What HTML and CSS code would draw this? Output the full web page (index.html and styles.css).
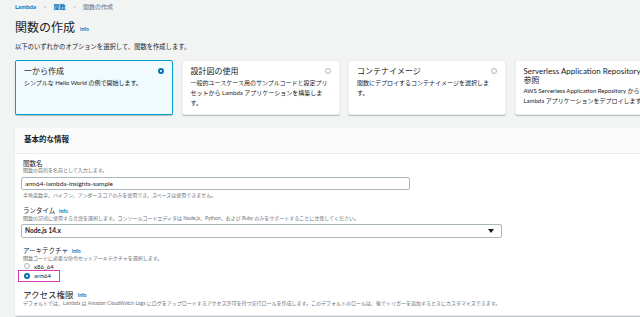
FILE: index.html
```html
<!DOCTYPE html>
<html lang="ja">
  <head>
    <meta charset="UTF-8" />
    <title>関数の作成</title>
    <link rel="stylesheet" href="styles.css">
  </head>
  <body>
    <div class="page">
      <div class="crumbs">
        <a>Lambda</a><span class="sep">&gt;</span><a>関数</a><span class="sep">&gt;</span><span class="here">関数の作成</span>
      </div>
      <h1>関数の作成 <span class="info">Info</span></h1>
      <p class="lead">以下のいずれかのオプションを選択して、関数を作成します。</p>

      <div class="cards">
        <div class="card selected">
          <div class="card-head">
            <span class="card-title">一から作成</span>
            <span class="radio on"></span>
          </div>
          <p class="card-desc">シンプルな Hello World の例で開始します。</p>
        </div>
        <div class="card">
          <div class="card-head">
            <span class="card-title">設計図の使用</span>
            <span class="radio"></span>
          </div>
          <p class="card-desc">一般的ユースケース用のサンプルコードと設定プリセットから Lambda アプリケーションを構築します。</p>
        </div>
        <div class="card">
          <div class="card-head">
            <span class="card-title">コンテナイメージ</span>
            <span class="radio"></span>
          </div>
          <p class="card-desc">関数にデプロイするコンテナイメージを選択します。</p>
        </div>
        <div class="card wide">
          <div class="card-head">
            <span class="card-title">Serverless Application Repository から<br>参照</span>
          </div>
          <p class="card-desc">AWS Serverless Application Repository からシンプル Lambda アプリケーションをデプロイします。</p>
        </div>
      </div>

      <div class="panel">
        <div class="panel-head">基本的な情報</div>
        <div class="panel-body">
          <div class="field">
            <div class="label">関数名</div>
            <div class="desc">関数の目的を名前として入力します。</div>
            <div class="input">arm64-lambda-insights-sample</div>
            <div class="hint">半角英数字、ハイフン、アンダースコアのみを使用でき、スペースは使用できません。</div>
          </div>

          <div class="field">
            <div class="label">ランタイム <span class="info">Info</span></div>
            <div class="desc">関数の記述に使用する言語を選択します。コンソールコードエディタは Node.js、Python、および Ruby のみをサポートすることに注意してください。</div>
            <div class="select">Node.js 14.x<span class="caret"></span></div>
          </div>

          <div class="field arch">
            <div class="label">アーキテクチャ <span class="info">Info</span></div>
            <div class="desc">関数コードに必要な命令セットアーキテクチャを選択します。</div>
            <div class="option"><span class="radio"></span>x86_64</div>
            <div class="option marked"><span class="radio on"></span>arm64</div>
          </div>

          <div class="section-title">アクセス権限 <span class="info">Info</span></div>
          <div class="desc">デフォルトでは、Lambda は Amazon CloudWatch Logs にログをアップロードするアクセス許可を持つ実行ロールを作成します。このデフォルトのロールは、後でトリガーを追加するときにカスタマイズできます。</div>
        </div>
      </div>
    </div>
  </body>
</html>
```

FILE: styles.css
```css
* {
  margin: 0;
  padding: 0;
  box-sizing: border-box;
}
html,
body {
  height: 100%;
  overflow: hidden;
}
body {
  background-color: #f2f3f3;
  font-family: Lato, "Noto Sans CJK JP", sans-serif;
  color: #16191f;
}
.page {
  padding-left: 15px;
  width: 700px;
}
.crumbs {
  font-size: 6px;
  line-height: 8px;
  padding-top: 3px;
  color: #687078;
}
.crumbs a {
  color: #0073bb;
  font-weight: bold;
}
.crumbs .sep {
  margin: 0 7px;
  color: #aab7b8;
}
h1 {
  font-size: 12px;
  font-weight: normal;
  line-height: 14px;
  margin-top: 10px;
}
.info {
  color: #0073bb;
  font-size: 5px;
  font-weight: bold;
  vertical-align: middle;
  margin-left: 2px;
}
.lead {
  font-size: 6.3px;
  line-height: 9px;
  margin-top: 6px;
}
.cards {
  display: flex;
  gap: 8.5px;
  margin-top: 9px;
}
.card {
  width: 158px;
  height: 55px;
  flex-shrink: 0;
  background: white;
  border: 1px solid #eef0f0;
  border-radius: 2px;
  box-shadow: 0 1px 1px rgba(0, 28, 36, 0.25);
  padding: 5px 8px;
}
.card.wide {
  width: 172px;
}
.card.wide .card-title {
  line-height: 9px;
  padding-top: 1px;
}
.card.selected {
  background: #f1faff;
  border-color: #00a1c9;
}
.card-head {
  display: flex;
  justify-content: space-between;
  align-items: center;
}
.card-title {
  font-size: 8px;
  line-height: 11px;
}
.card-desc {
  font-size: 6px;
  line-height: 10px;
  margin-top: 1px;
}
.radio {
  display: inline-block;
  width: 6px;
  height: 6px;
  border-radius: 50%;
  border: 1px solid #aab7b8;
  background: white;
  flex-shrink: 0;
}
.radio.on {
  border: 2px solid #0073bb;
}
.panel {
  margin-top: 13px;
  background: white;
  box-shadow: 0 1px 1px rgba(0, 28, 36, 0.25);
  border-radius: 2px;
}
.panel-head {
  background: #fafafa;
  border-bottom: 1px solid #eaeded;
  font-size: 7.5px;
  font-weight: bold;
  line-height: 10px;
  padding: 7px 9px 8px;
}
.panel-body {
  padding: 6px 8px 9px;
  border-bottom: 1px solid #eaeded;
}
.field {
  margin-bottom: 9px;
}
.label {
  font-size: 6.5px;
  line-height: 7px;
}
.desc,
.hint {
  font-size: 5px;
  line-height: 6px;
  color: #687078;
}
.input,
.select {
  border: 1px solid #aab7b8;
  border-radius: 2px;
  font-size: 6.5px;
  padding: 0 3px;
}
.input {
  width: 389px;
  height: 13px;
  line-height: 11px;
  margin: 4px 0 2px -2px;
}
.select {
  width: 481px;
  height: 14px;
  margin: 3px 0 0 -2px;
  font-weight: bold;
  display: flex;
  justify-content: space-between;
  align-items: center;
  padding-right: 7px;
}
.caret {
  width: 0;
  height: 0;
  border-left: 3px solid transparent;
  border-right: 3px solid transparent;
  border-top: 4px solid #16191f;
}
.option {
  display: flex;
  align-items: center;
  gap: 4px;
  font-size: 6px;
  line-height: 7px;
  height: 7px;
  width: 42px;
  margin-top: 2px;
  padding-left: 1px;
}
.option.marked {
  border: 1px solid #d63db8;
  height: 12px;
  margin-top: 0;
  margin-left: -5px;
  padding-left: 5px;
}
.field.arch {
  margin-bottom: 9px;
}
.section-title {
  font-size: 8.5px;
  line-height: 9px;
}
```
